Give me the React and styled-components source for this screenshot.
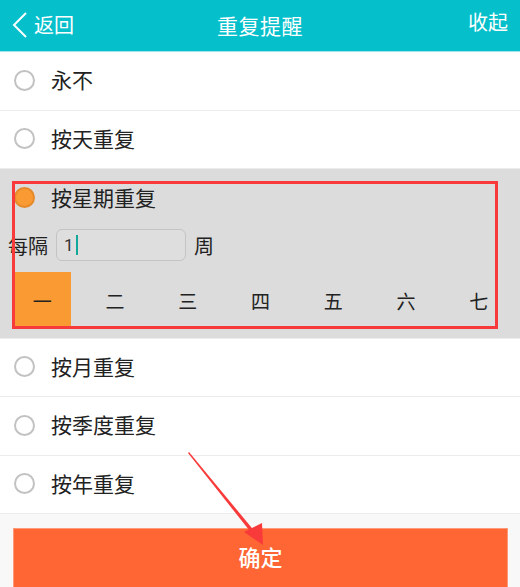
import React, { useState } from 'react'
import styled, { createGlobalStyle } from 'styled-components'

const GlobalStyle = createGlobalStyle`
  html, body {
    margin: 0;
    padding: 0;
    background: #ffffff;
  }
  body {
    font-family: 'Noto Sans CJK SC', 'Noto Sans', sans-serif;
  }
`

const Page = styled.div`
  position: relative;
  width: 520px;
  height: 587px;
  overflow: hidden;
  background: #ffffff;
`

const Header = styled.div`
  display: flex;
  align-items: center;
  justify-content: space-between;
  height: 52px;
  box-sizing: border-box;
  padding: 0 12px 2px 12px;
  background: #05bfcb;
  border-bottom: 1px solid #9fe4e8;
  color: #ffffff;
`

const BackBtn = styled.div`
  display: flex;
  align-items: center;
  gap: 6px;
  width: 120px;
  font-size: 20px;
`

const Title = styled.div`
  font-size: 21px;
  letter-spacing: 0.5px;
`

const HeaderAction = styled.div`
  width: 120px;
  text-align: right;
  font-size: 20px;
  margin-bottom: 6px;
`

const OptionRow = styled.div`
  display: flex;
  align-items: center;
  height: 58.5px;
  box-sizing: border-box;
  padding: 0 0 3px 14px;
  background: #ffffff;
  border-bottom: 1px solid #ececec;
  font-size: 21px;
  color: #222;
`

const Radio = styled.span`
  width: 21px;
  height: 21px;
  box-sizing: border-box;
  border-radius: 50%;
  border: 2px solid ${(p) => (p.checked ? '#e58a2a' : '#c2c2c2')};
  background: ${(p) => (p.checked ? '#f99a33' : 'transparent')};
  margin: 2px 16px 0 0;
  flex-shrink: 0;
`

const WeekSection = styled.div`
  background: #dcdcdc;
  height: 169.5px;
  box-sizing: border-box;
  border-bottom: 1px solid #ececec;
`

const WeekHead = styled(OptionRow)`
  background: transparent;
  border-bottom: none;
  height: 58px;
`

const IntervalRow = styled.div`
  display: flex;
  align-items: center;
  height: 36px;
  padding-left: 8px;
  font-size: 20px;
  color: #222;
`

const IntervalInput = styled.div`
  display: flex;
  align-items: center;
  width: 130px;
  height: 32px;
  box-sizing: border-box;
  margin: 0 8px;
  padding-left: 7px;
  border: 1px solid #c4c4c4;
  border-radius: 6px;
  background: #dedede;
  font-family: Roboto, 'Liberation Sans', sans-serif;
  font-size: 17px;
  color: #333;
`

const Caret = styled.span`
  display: inline-block;
  width: 2px;
  height: 20px;
  margin-left: 2px;
  background: #0fa89a;
`

const DayRow = styled.div`
  display: flex;
  height: 56px;
  margin-top: 9px;
  padding: 0 5px 0 6px;
`

const DayCell = styled.div`
  flex: 1;
  display: flex;
  justify-content: center;
`

const DayLabel = styled.div`
  display: flex;
  align-items: center;
  justify-content: center;
  width: 58px;
  height: 100%;
  background: ${(p) => (p.active ? '#f99a33' : 'transparent')};
  font-size: 19px;
  color: #222;
`

const Footer = styled.div`
  height: 74px;
  box-sizing: border-box;
  padding: 14px 12px 0 13px;
  background: #f8f8f8;
`

const ConfirmBtn = styled.div`
  display: flex;
  align-items: center;
  justify-content: center;
  height: 62px;
  box-sizing: border-box;
  border: 1px solid #ff9a78;
  background: #ff6633;
  color: #ffffff;
  font-size: 22px;
  font-weight: 500;
  padding-bottom: 6px;
`

const HighlightBox = styled.div`
  position: absolute;
  left: 12px;
  top: 181px;
  width: 486px;
  height: 148px;
  box-sizing: border-box;
  border: 3px solid #f83a3a;
  pointer-events: none;
`

const ArrowLayer = styled.svg`
  position: absolute;
  left: 0;
  top: 0;
  pointer-events: none;
`

const days = ['一', '二', '三', '四', '五', '六', '七']

const App = () => {
  const [activeDay] = useState(0)

  return (
    <Page>
      <GlobalStyle />
      <Header>
        <BackBtn>
          <svg width="16" height="28" viewBox="0 0 16 28">
            <path d="M14 2 L2 14 L14 26" fill="none" stroke="#ffffff" strokeWidth="2" />
          </svg>
          返回
        </BackBtn>
        <Title>重复提醒</Title>
        <HeaderAction>收起</HeaderAction>
      </Header>

      <OptionRow>
        <Radio />
        永不
      </OptionRow>
      <OptionRow>
        <Radio />
        按天重复
      </OptionRow>

      <WeekSection>
        <WeekHead>
          <Radio checked />
          按星期重复
        </WeekHead>
        <IntervalRow>
          每隔
          <IntervalInput>
            1<Caret />
          </IntervalInput>
          周
        </IntervalRow>
        <DayRow>
          {days.map((d, i) => (
            <DayCell key={d}>
              <DayLabel active={i === activeDay}>{d}</DayLabel>
            </DayCell>
          ))}
        </DayRow>
      </WeekSection>

      <OptionRow>
        <Radio />
        按月重复
      </OptionRow>
      <OptionRow>
        <Radio />
        按季度重复
      </OptionRow>
      <OptionRow>
        <Radio />
        按年重复
      </OptionRow>

      <Footer>
        <ConfirmBtn>确定</ConfirmBtn>
      </Footer>

      {/* annotation overlays */}
      <HighlightBox />
      <ArrowLayer width="520" height="587" viewBox="0 0 520 587">
        <polygon points="188,453 189,452 256,533 253,535" fill="#f83a3a" />
        <polygon points="263,545 244,532 262,523" fill="#f83a3a" />
      </ArrowLayer>
    </Page>
  )
}

export default App
